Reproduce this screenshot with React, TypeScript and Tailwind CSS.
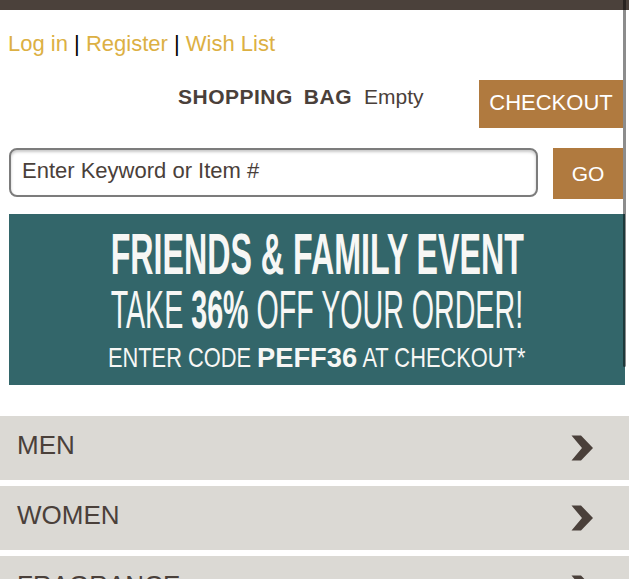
import React from "react";

function Chevron() {
  return (
    <svg width="22" height="26" viewBox="0 0 22 26" className="shrink-0">
      <polygon points="0.5,0.5 10,0.5 22,13 10,25.5 0.5,25.5 11,13" fill="#4a403a" />
    </svg>
  );
}

function MenuRow({ label }: { label: string }) {
  return (
    <div className="flex h-[64px] w-full items-center justify-between bg-[#dbd9d4] pl-[17px] pr-[36px]">
      <span className="mb-[6px] block text-[26px] leading-[26px] text-[#4a403a]">{label}</span>
      <Chevron />
    </div>
  );
}

export default function App() {
  return (
    <div className="relative h-[579px] w-[629px] overflow-hidden bg-white font-['Liberation_Sans',Arial,sans-serif]">
      <div className="h-[10px] w-full bg-[#4b413b]" />

      {/* account links */}
      <div className="pl-[8px] pt-[23px] text-[22px] leading-[22px] text-[#dcb043] whitespace-nowrap">
        <span>Log in</span>
        <span className="text-black"> | </span>
        <span>Register</span>
        <span className="text-black"> | </span>
        <span>Wish List</span>
      </div>

      {/* shopping bag row */}
      <div className="mt-[25px] flex items-start pr-[6px]">
        <div className="ml-[178px] mt-[6px] flex whitespace-nowrap text-[21px] leading-[21px] text-[#4a403a]">
          <span className="font-bold tracking-[0.5px]">SHOPPING</span>
          <span className="ml-[11px] font-bold tracking-[0.5px]">BAG</span>
          <span className="ml-[12px]">Empty</span>
        </div>
        <button className="ml-auto flex h-[48px] w-[144px] items-center justify-center bg-[#b07a3f] pb-[3px] text-[22px] leading-[22px] text-white">
          CHECKOUT
        </button>
      </div>

      {/* search row */}
      <div className="mt-[20px] flex items-start">
        <div className="ml-[9px] flex h-[49px] w-[529px] items-center rounded-[8px] border-2 border-[#7c7c7c] pl-[11px] shadow-[inset_0_2px_3px_rgba(0,0,0,0.22)]">
          <span className="mb-[4px] text-[22px] leading-[22px] text-[#4a403a]">Enter Keyword or Item #</span>
        </div>
        <button className="ml-[15px] flex h-[51px] w-[70px] items-center justify-center bg-[#b07a3f] text-[21px] leading-[21px] text-white">
          GO
        </button>
      </div>

      {/* promo banner */}
      <div className="ml-[9px] mt-[15px] flex h-[171px] w-[616px] flex-col overflow-hidden bg-[#33666a] pt-[11px] text-[#f7f7f5]">
        <div className="flex w-full justify-center">
          <span className="inline-block scale-x-[0.555] whitespace-nowrap text-[58px] font-bold leading-[58px]">
            FRIENDS &amp; FAMILY EVENT
          </span>
        </div>
        <div className="flex w-full justify-center">
          <span className="inline-block scale-x-[0.54] whitespace-nowrap text-[53px] leading-[53px]">
            TAKE <span className="font-bold">36%</span> OFF YOUR ORDER!
          </span>
        </div>
        <div className="mt-[8px] flex w-full justify-center">
          <span className="inline-block scale-x-[0.78] whitespace-nowrap text-[28px] leading-[28px]">
            ENTER CODE{" "}
            <span className="mx-[13px] inline-block scale-x-[1.25] font-bold">PEFF36</span> AT CHECKOUT*
          </span>
        </div>
      </div>

      {/* category menu */}
      <div className="mt-[31px] flex flex-col gap-[6px]">
        <MenuRow label="MEN" />
        <MenuRow label="WOMEN" />
        <MenuRow label="FRAGRANCE" />
        <MenuRow label="ACCESSORIES" />
      </div>

      {/* scrollbar overlay */}
      <div className="absolute left-[623px] top-0 h-[367px] w-[3px] rounded-b-full bg-black/45" />
    </div>
  );
}
